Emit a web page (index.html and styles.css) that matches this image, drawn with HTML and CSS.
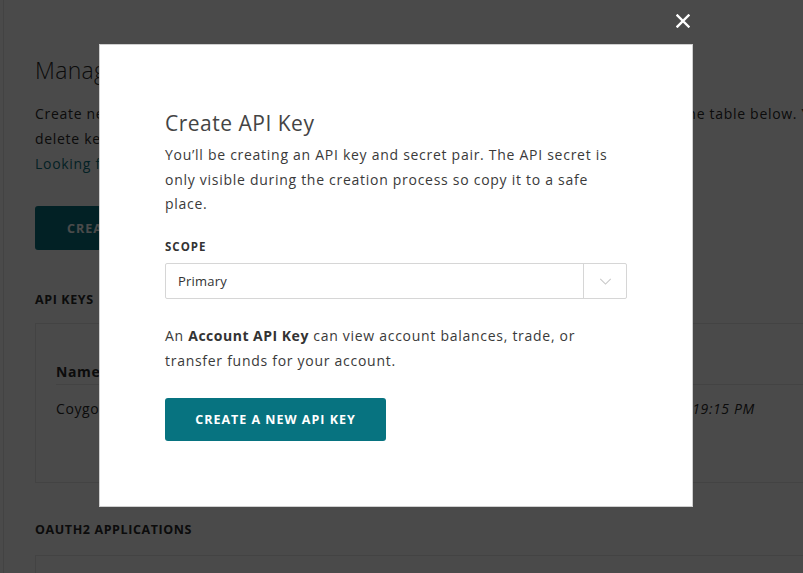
FILE: index.html
```html
<!DOCTYPE html>
<html lang="en">
<head>
<meta charset="utf-8">
<title>Create API Key</title>
<link rel="stylesheet" href="styles.css">
</head>
<body>
<div class="app">
  <aside class="rail"></aside>
  <main class="content">
    <h1 class="page-title">Manage API Keys</h1>
    <p class="intro">Create new API keys for your account, and view, check or manage all your existing keys in the table below. You can also<br>delete keys you no longer need at any time.<br><a class="link" href="#">Looking for OAuth2 applications? Read the docs</a></p>
    <button class="primary-btn" type="button">Create API Key</button>

    <h2 class="section-title">API Keys</h2>
    <div class="card">
      <div class="table">
        <div class="row head">
          <div class="cell c-name">Name</div>
          <div class="cell c-key">API Key</div>
          <div class="cell c-scope">Scope</div>
          <div class="cell c-date">Created</div>
        </div>
        <div class="row">
          <div class="cell c-name">Coygo</div>
          <div class="cell c-key">a1b2c3d4e5f6</div>
          <div class="cell c-scope">Primary</div>
          <div class="cell c-date"><em>Feb 3, 2021 4:19:15 PM</em></div>
        </div>
      </div>
    </div>

    <h2 class="section-title second">OAuth2 Applications</h2>
    <div class="card card-empty"></div>
  </main>
</div>

<div class="overlay">
  <button class="close" type="button" aria-label="Close">
    <svg viewBox="0 0 14 14" width="14" height="14"><path d="M1.5 1.5 L12.5 12.5 M12.5 1.5 L1.5 12.5" stroke="#fff" stroke-width="2.4" stroke-linecap="square" fill="none"/></svg>
  </button>
  <div class="modal">
    <h2 class="modal-title">Create API Key</h2>
    <p class="modal-text">You’ll be creating an API key and secret pair. The API secret is only visible during the creation process so copy it to a safe place.</p>
    <label class="field-label">Scope</label>
    <div class="select">
      <span class="select-value">Primary</span>
      <span class="select-arrow">
        <svg viewBox="0 0 14 8" width="13" height="7"><path d="M1 1 L7 7 L13 1" stroke="#c8c8c8" stroke-width="1.2" fill="none"/></svg>
      </span>
    </div>
    <p class="modal-text info">An <strong>Account API Key</strong> can view account balances, trade, or transfer funds for your account.</p>
    <div class="actions">
      <button class="cta" type="button">Create a new API key</button>
    </div>
  </div>
</div>
</body>
</html>
```

FILE: styles.css
```css
* { box-sizing: border-box; }
html, body { margin: 0; padding: 0; }
body {
  font-family: "Open Sans", "Liberation Sans", sans-serif;
  color: #333;
  background: #fff;
  width: 803px;
  height: 573px;
  overflow: hidden;
}
.app {
  display: flex;
  width: 1100px;
}
.rail {
  width: 4px;
  flex: none;
  border-right: 1px solid #e6e6e6;
  min-height: 573px;
}
.content {
  flex: 1;
  padding: 56px 0 0 31px;
}
.page-title {
  margin: 0;
  font-size: 23px;
  font-weight: 300;
  line-height: 28px;
  letter-spacing: .3px;
  color: #2a2a2a;
}
.intro {
  margin: 17px 0 0;
  font-size: 14px;
  line-height: 25px;
  letter-spacing: .7px;
  color: #2a2a2a;
}
.link { color: #0a7380; text-decoration: none; }
.primary-btn {
  margin-top: 30px;
  height: 44px;
  width: 200px;
  border: 0;
  border-radius: 3px;
  background: #077380;
  color: #fff;
  font-family: inherit;
  font-weight: 700;
  font-size: 12.5px;
  text-transform: uppercase;
  letter-spacing: 1px;
  text-align: left;
  padding-left: 32px;
}
.section-title {
  margin: 43px 0 16px;
  font-size: 12.5px;
  font-weight: 700;
  text-transform: uppercase;
  line-height: 14px;
  letter-spacing: .6px;
  color: #2a2a2a;
}
.section-title.second { margin: 40px 0 18px; }
.card {
  border: 1px solid #e6e6e6;
  height: 160px;
  padding: 35px 20px 0;
}
.card-empty { height: 40px; }
.table { display: flex; flex-direction: column; }
.row {
  display: flex;
  height: 26px;
  align-items: center;
}
.row.head {
  font-weight: 700;
  border-bottom: 1px solid #e6e6e6;
  height: 26px;
  margin-bottom: 10px;
}
.cell { font-size: 14px; letter-spacing: .6px; color: #2a2a2a; }
.c-name { width: 200px; }
.c-key { width: 230px; }
.c-scope { width: 112px; }
.c-date { width: 240px; }

.overlay {
  position: fixed;
  inset: 0;
  background: rgba(0, 0, 0, .71);
}
.close {
  position: absolute;
  left: 676px;
  top: 14px;
  width: 14px;
  height: 14px;
  padding: 0;
  border: 0;
  background: none;
  display: flex;
}
.modal {
  position: absolute;
  left: 99px;
  top: 44px;
  width: 594px;
  height: 463px;
  background: #fff;
  border: 1px solid #cfcfcf;
  padding: 65px 65px;
  display: flex;
  flex-direction: column;
}
.modal-title {
  margin: 0 0 7px;
  font-size: 21px;
  font-weight: 400;
  line-height: 26px;
  letter-spacing: .5px;
  color: #444;
}
.modal-text {
  margin: 0;
  font-size: 14px;
  line-height: 24.5px;
  letter-spacing: .72px;
  color: #3a3a3a;
}
.modal-text strong { font-weight: 700; color: #333; letter-spacing: .5px; }
.field-label {
  margin-top: 23.5px;
  font-size: 11.5px;
  font-weight: 700;
  line-height: 14px;
  letter-spacing: 1px;
  text-transform: uppercase;
  color: #333;
}
.select {
  margin-top: 9px;
  height: 36px;
  border: 1px solid #d6d6d6;
  border-radius: 2px;
  display: flex;
  align-items: stretch;
}
.select-value {
  flex: 1;
  display: flex;
  align-items: center;
  padding-left: 12px;
  font-size: 13px;
  letter-spacing: .2px;
  color: #333;
}
.select-arrow {
  width: 43px;
  border-left: 1px solid #d6d6d6;
  display: flex;
  align-items: center;
  justify-content: center;
}
.info {
  margin-top: 24px;
  line-height: 25px;
}
.actions { margin-top: 24.5px; }
.cta {
  height: 43px;
  width: 221px;
  border: 0;
  border-radius: 3px;
  background: #077380;
  color: #fff;
  font-family: inherit;
  font-weight: 700;
  font-size: 12.5px;
  text-transform: uppercase;
  letter-spacing: 1px;
  padding: 0;
}
```
